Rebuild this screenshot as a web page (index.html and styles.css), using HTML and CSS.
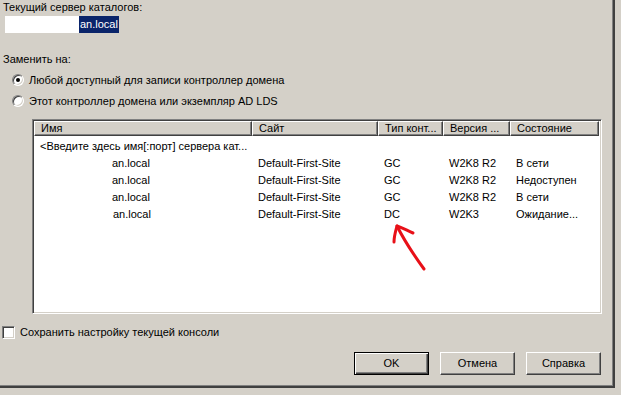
FILE: index.html
```html
<!DOCTYPE html>
<html lang="ru">
<head>
  <meta charset="UTF-8">
  <title>Сменить сервер каталогов</title>
  <link rel="stylesheet" href="styles.css">
</head>
<body>
  <div class="dialog">
    <div class="caption">Текущий сервер каталогов:</div>
    <div class="current"><span class="blank"></span><span class="sel">an.local</span></div>

    <div class="caption replace">Заменить на:</div>
    <label class="option first"><span class="radio checked"></span>Любой доступный для записи контроллер домена</label>
    <label class="option"><span class="radio"></span>Этот контроллер домена или экземпляр AD LDS</label>

    <div class="listbox">
      <div class="row header">
        <div class="cell c-name">Имя</div>
        <div class="cell c-site">Сайт</div>
        <div class="cell c-type">Тип конт...</div>
        <div class="cell c-ver">Версия ...</div>
        <div class="cell c-state">Состояние</div>
      </div>
      <div class="row">
        <div class="cell c-name">&lt;Введите здесь имя[:порт] сервера кат...</div>
      </div>
      <div class="row">
        <div class="cell c-name"><span class="host">an.local</span></div>
        <div class="cell c-site">Default-First-Site</div>
        <div class="cell c-type">GC</div>
        <div class="cell c-ver">W2K8 R2</div>
        <div class="cell c-state">В сети</div>
      </div>
      <div class="row">
        <div class="cell c-name"><span class="host">an.local</span></div>
        <div class="cell c-site">Default-First-Site</div>
        <div class="cell c-type">GC</div>
        <div class="cell c-ver">W2K8 R2</div>
        <div class="cell c-state">Недоступен</div>
      </div>
      <div class="row">
        <div class="cell c-name"><span class="host">an.local</span></div>
        <div class="cell c-site">Default-First-Site</div>
        <div class="cell c-type">GC</div>
        <div class="cell c-ver">W2K8 R2</div>
        <div class="cell c-state">В сети</div>
      </div>
      <div class="row">
        <div class="cell c-name"><span class="host last">an.local</span></div>
        <div class="cell c-site">Default-First-Site</div>
        <div class="cell c-type">DC</div>
        <div class="cell c-ver">W2K3</div>
        <div class="cell c-state">Ожидание...</div>
      </div>
    </div>

    <label class="keep"><span class="check"></span>Сохранить настройку текущей консоли</label>

    <div class="buttons">
      <button class="btn default">OK</button>
      <button class="btn">Отмена</button>
      <button class="btn">Справка</button>
    </div>

    <svg class="arrow" width="621" height="395" viewBox="0 0 621 395">
      <path d="M424 269 C 416 258, 406 244, 397 226" />
      <path d="M394 242 C 394 236, 396 230, 397 226 C 403 228, 408 231, 413 233" />
    </svg>
  </div>
</body>
</html>
```

FILE: styles.css
```css
body {
  margin: 0;
  background: #d4d0c8;
  font-family: "Liberation Sans", Arial, sans-serif;
  font-size: 11px;
  line-height: 13px;
  color: #000;
}
.dialog {
  position: relative;
  width: 613px;
  height: 386px;
  border-right: 2px solid #404040;
  border-bottom: 2px solid #404040;
  box-shadow: inset -1px -1px #808080;
}
.caption {
  padding: 1px 0 0 3px;
}
.current {
  display: flex;
  height: 17px;
  margin: 2px 0 0 5px;
}
.blank {
  width: 74px;
  background: #fff;
}
.sel {
  background: #0a246a;
  color: #fff;
  line-height: 17px;
  padding: 0 1px;
}
.replace {
  margin-top: 19px;
}
.option {
  display: flex;
  align-items: center;
  gap: 5px;
  height: 16px;
  padding-left: 12px;
  margin-top: 5px;
}
.option.first {
  margin-top: 6px;
}
.radio {
  position: relative;
  width: 10px;
  height: 10px;
  border-radius: 50%;
  background: #fff;
  border: 1px solid;
  border-color: #808080 #fff #fff #808080;
  box-shadow: inset 1px 1px #404040, inset -1px -1px #d4d0c8;
}
.radio.checked::after {
  content: "";
  position: absolute;
  left: 3px;
  top: 3px;
  width: 4px;
  height: 4px;
  border-radius: 50%;
  background: #000;
}
.listbox {
  width: 566px;
  height: 191px;
  margin: 10px 0 0 32px;
  background: #fff;
  border: 1px solid;
  border-color: #808080 #fff #fff #808080;
  box-shadow: inset 1px 1px #404040, inset -1px -1px #d4d0c8;
  padding: 1px;
}
.row {
  display: flex;
  height: 17px;
  line-height: 17px;
  white-space: nowrap;
}
.cell {
  padding-left: 6px;
  box-sizing: border-box;
  overflow: hidden;
}
.c-name { width: 218px; }
.c-site { width: 126px; }
.c-type { width: 65px; }
.c-ver { width: 67px; }
.c-state { width: 89px; }
.row.header {
  height: 15px;
  line-height: 13px;
  margin-bottom: 2px;
}
.header .cell {
  background: #d4d0c8;
  border: 1px solid;
  border-color: #fff #404040 #404040 #fff;
  box-shadow: inset -1px -1px #808080;
}
.row .c-name:only-child {
  width: auto;
  overflow: visible;
}
.host {
  padding-left: 72px;
}
.host.last {
  padding-left: 73px;
}
.keep {
  display: flex;
  align-items: center;
  gap: 5px;
  margin: 12px 0 0 2px;
  height: 13px;
}
.check {
  width: 9px;
  height: 9px;
  background: #fff;
  border: 1px solid;
  border-color: #808080 #fff #fff #808080;
  box-shadow: inset 1px 1px #404040, inset -1px -1px #d4d0c8;
  padding: 1px;
}
.buttons {
  display: flex;
  justify-content: flex-end;
  gap: 11px;
  margin-top: 13px;
  padding-right: 12px;
}
.btn {
  width: 75px;
  height: 23px;
  font: inherit;
  color: #000;
  background: #d4d0c8;
  border: 1px solid;
  border-color: #fff #404040 #404040 #fff;
  box-shadow: inset -1px -1px #808080;
  padding: 0;
}
.btn.default {
  border-color: #000;
  box-shadow: inset 1px 1px #fff, inset -1px -1px #404040, inset -2px -2px #808080;
}
.arrow {
  position: absolute;
  left: 0;
  top: 0;
  fill: none;
  stroke: #e81018;
  stroke-width: 3;
  stroke-linecap: round;
  stroke-linejoin: round;
}
```
